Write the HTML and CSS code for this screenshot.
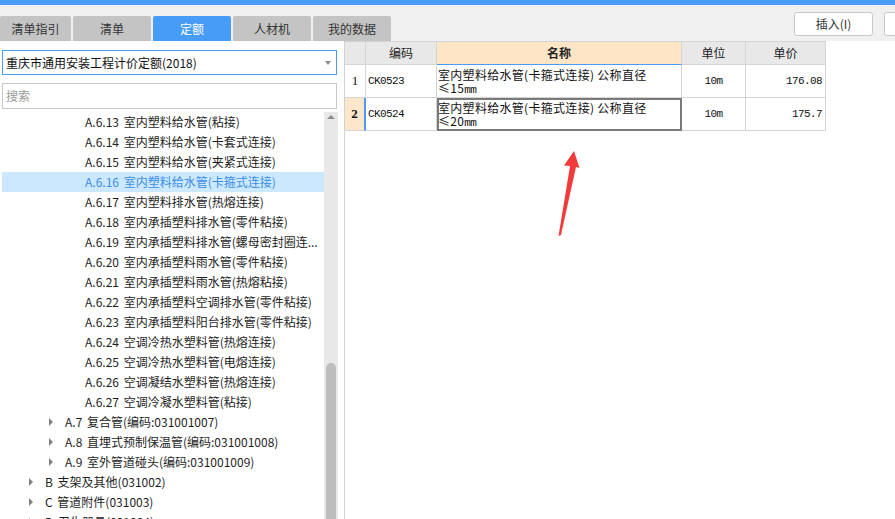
FILE: index.html
```html
<!DOCTYPE html>
<html lang="zh-CN">
<head>
<meta charset="utf-8">
<title>定额</title>
<link rel="stylesheet" href="styles.css">
</head>
<body>
<div class="topline"></div>
<div class="header">
  <div class="tabs">
    <div class="tab tab-first">清单指引</div>
    <div class="tab">清单</div>
    <div class="tab active">定额</div>
    <div class="tab">人材机</div>
    <div class="tab">我的数据</div>
  </div>
  <div class="tools">
    <button class="btn">插入(I)</button>
    <button class="btn">替换(R)</button>
  </div>
</div>
<div class="main">
  <div class="left">
    <div class="combo"><span>重庆市通用安装工程计价定额(2018)</span><i class="caret"></i></div>
    <div class="search">搜索</div>
    <div class="treewrap">
      <div class="tree">
        <div class="node l3">A.6.13 室内塑料给水管(粘接)</div>
        <div class="node l3">A.6.14 室内塑料给水管(卡套式连接)</div>
        <div class="node l3">A.6.15 室内塑料给水管(夹紧式连接)</div>
        <div class="node l3 selected">A.6.16 室内塑料给水管(卡箍式连接)</div>
        <div class="node l3">A.6.17 室内塑料排水管(热熔连接)</div>
        <div class="node l3">A.6.18 室内承插塑料排水管(零件粘接)</div>
        <div class="node l3">A.6.19 室内承插塑料排水管(螺母密封圈连...</div>
        <div class="node l3">A.6.20 室内承插塑料雨水管(零件粘接)</div>
        <div class="node l3">A.6.21 室内承插塑料雨水管(热熔粘接)</div>
        <div class="node l3">A.6.22 室内承插塑料空调排水管(零件粘接)</div>
        <div class="node l3">A.6.23 室内承插塑料阳台排水管(零件粘接)</div>
        <div class="node l3">A.6.24 空调冷热水塑料管(热熔连接)</div>
        <div class="node l3">A.6.25 空调冷热水塑料管(电熔连接)</div>
        <div class="node l3">A.6.26 空调凝结水塑料管(热熔连接)</div>
        <div class="node l3">A.6.27 空调冷凝水塑料管(粘接)</div>
        <div class="node l2"><i class="arrow"></i>A.7 复合管(编码:031001007)</div>
        <div class="node l2"><i class="arrow"></i>A.8 直埋式预制保温管(编码:031001008)</div>
        <div class="node l2"><i class="arrow"></i>A.9 室外管道碰头(编码:031001009)</div>
        <div class="node l1"><i class="arrow"></i>B 支架及其他(031002)</div>
        <div class="node l1"><i class="arrow"></i>C 管道附件(031003)</div>
        <div class="node l1"><i class="arrow"></i>D 卫生器具(031004)</div>
      </div>
      <div class="scroll">
        <i class="up"></i>
        <div class="thumb"></div>
      </div>
    </div>
  </div>
  <div class="right">
    <table class="grid">
      <thead>
        <tr>
          <th class="c-no"></th>
          <th class="c-code">编码</th>
          <th class="c-name cur">名称</th>
          <th class="c-unit">单位</th>
          <th class="c-price">单价</th>
        </tr>
      </thead>
      <tbody>
        <tr>
          <td class="no">1</td>
          <td class="code">CK0523</td>
          <td class="name"><span class="ln">室内塑料给水管(卡箍式连接) 公称直径</span><span class="ln">≤15<span class="mono">mm</span></span></td>
          <td class="unit">10m</td>
          <td class="price">176.08</td>
        </tr>
        <tr>
          <td class="no cur-row">2</td>
          <td class="code">CK0524</td>
          <td class="name focus"><span class="ln">室内塑料给水管(卡箍式连接) 公称直径</span><span class="ln">≤20<span class="mono">mm</span></span></td>
          <td class="unit">10m</td>
          <td class="price">175.7</td>
        </tr>
      </tbody>
    </table>
    <svg class="pointer" width="40" height="95" viewBox="0 0 40 95">
      <polygon points="29,5 34.5,22 31,21 16,89 13.5,90 25,20 19,19.5" fill="#f43b3b"/>
    </svg>
  </div>
</div>
</body>
</html>
```

FILE: styles.css
```css
html, body {
  margin: 0;
  padding: 0;
}
body {
  width: 895px;
  height: 519px;
  overflow: hidden;
  background: #ffffff;
  font-family: "Noto Sans CJK SC", "Microsoft YaHei", sans-serif;
  font-size: 12px;
  color: #222;
}

.topline {
  height: 5px;
  background: #4a9af7;
}

.header {
  height: 36px;
  background: #f0f0f0;
  display: flex;
  align-items: flex-end;
}

.tabs {
  display: flex;
  gap: 2px;
  height: 25px;
}
.tab {
  width: 78px;
  height: 25px;
  line-height: 25px;
  text-align: center;
  background: #c4c4c4;
  color: #333;
  border-radius: 2px 2px 0 0;
  font-size: 12px;
}
.tab-first {
  width: 71px;
}
.tab.active {
  background: #469cf7;
  color: #fff;
}

.tools {
  margin-left: auto;
  align-self: flex-start;
  margin-top: 7px;
  width: 101px;
  display: flex;
  gap: 11px;
  overflow: hidden;
}
.btn {
  flex-shrink: 0;
  width: 79px;
  height: 24px;
  padding: 0;
  border: 1px solid #c9c9c9;
  border-radius: 3px;
  background: #fff;
  font-family: inherit;
  font-size: 12px;
  color: #333;
  line-height: 22px;
}

.main {
  display: flex;
  height: 478px;
}

.left {
  width: 344px;
  flex-shrink: 0;
  box-sizing: border-box;
  padding: 9px 6px 0 2px;
  background: #fff;
}
.combo {
  width: 335px;
  height: 25px;
  box-sizing: border-box;
  border: 1px solid #4a9af7;
  display: flex;
  align-items: center;
  padding-left: 3px;
  color: #111;
}
.caret {
  margin-left: auto;
  margin-right: 5px;
  width: 0;
  height: 0;
  border-left: 3px solid transparent;
  border-right: 3px solid transparent;
  border-top: 4px solid #8a8a8a;
}
.search {
  width: 335px;
  height: 26px;
  box-sizing: border-box;
  margin-top: 8px;
  border: 1px solid #c8c8c8;
  padding-left: 3px;
  line-height: 24px;
  color: #9a9a9a;
}

.treewrap {
  margin-top: 3px;
  display: flex;
  height: 407px;
}
.tree {
  width: 322px;
  overflow: hidden;
}
.node {
  height: 20px;
  line-height: 20px;
  white-space: nowrap;
  color: #1e1e1e;
  display: flex;
  align-items: center;
  word-spacing: 2px;
}
.node.l3 { padding-left: 83px; }
.node.l2 { padding-left: 47px; }
.node.l1 { padding-left: 27px; }
.node.selected {
  background: #cce8ff;
  color: #3b8ee6;
}
.arrow {
  width: 0;
  height: 0;
  border-left: 4px solid #808080;
  border-top: 4px solid transparent;
  border-bottom: 4px solid transparent;
  margin-right: 12px;
}

.scroll {
  width: 14px;
  background: #e8e8e8;
  position: relative;
}
.up {
  position: absolute;
  left: 3px;
  top: 3px;
  width: 0;
  height: 0;
  border-left: 4px solid transparent;
  border-right: 4px solid transparent;
  border-bottom: 4px solid #8c8c8c;
}
.thumb {
  position: absolute;
  left: 2px;
  width: 10px;
  top: 251px;
  bottom: 0;
  background: #bdbdbd;
  border-radius: 5px 5px 0 0;
}

.right {
  flex: 1;
  border-left: 1px solid #d2d2d2;
  position: relative;
  background: #fff;
}

.grid {
  border-collapse: separate;
  border-spacing: 0;
  table-layout: fixed;
  width: 481px;
  border-top: 1px solid #d4d4d4;
  font-size: 12px;
}
.grid th,
.grid td {
  box-sizing: border-box;
  padding: 0;
  border-right: 1px solid #d4d4d4;
  border-bottom: 1px solid #d4d4d4;
}
.grid th {
  height: 23px;
  background: #e8e8e8;
  font-weight: normal;
  color: #222;
  line-height: 20px;
}
.grid td {
  height: 33px;
  color: #111;
}
.c-no { width: 21px; }
.c-code { width: 71px; }
.c-name { width: 245px; }
.c-unit { width: 64px; }
.c-price { width: 80px; }

.grid th.cur {
  background: #fde5c6;
  border-bottom-color: #4a9af7;
  font-weight: bold;
}

.no {
  text-align: center;
  font-family: "Liberation Serif", serif;
  font-size: 13px;
}
.no.cur-row {
  background: #fde6c9;
  border-right: 2px solid #4a9af7 !important;
  font-weight: bold;
}
.code {
  padding-left: 2px !important;
  font-family: "Liberation Mono", monospace;
  font-size: 11px;
  letter-spacing: -0.6px;
}
.name {
  padding-left: 1px !important;
  white-space: nowrap;
  letter-spacing: 0.3px;
}
.ln {
  display: block;
  height: 13px;
  line-height: 13px;
}
.name.focus {
  outline: 2px solid #7a7a7a;
  outline-offset: -2px;
}
.mono {
  font-family: "Liberation Mono", monospace;
  font-size: 11px;
  letter-spacing: -0.6px;
}
.unit {
  text-align: center;
  font-family: "Liberation Mono", monospace;
  font-size: 11px;
  letter-spacing: -0.6px;
}
.price {
  text-align: right;
  padding-right: 3px !important;
  font-family: "Liberation Mono", monospace;
  font-size: 11px;
  letter-spacing: -0.6px;
}

.pointer {
  position: absolute;
  left: 200px;
  top: 105px;
}
```
